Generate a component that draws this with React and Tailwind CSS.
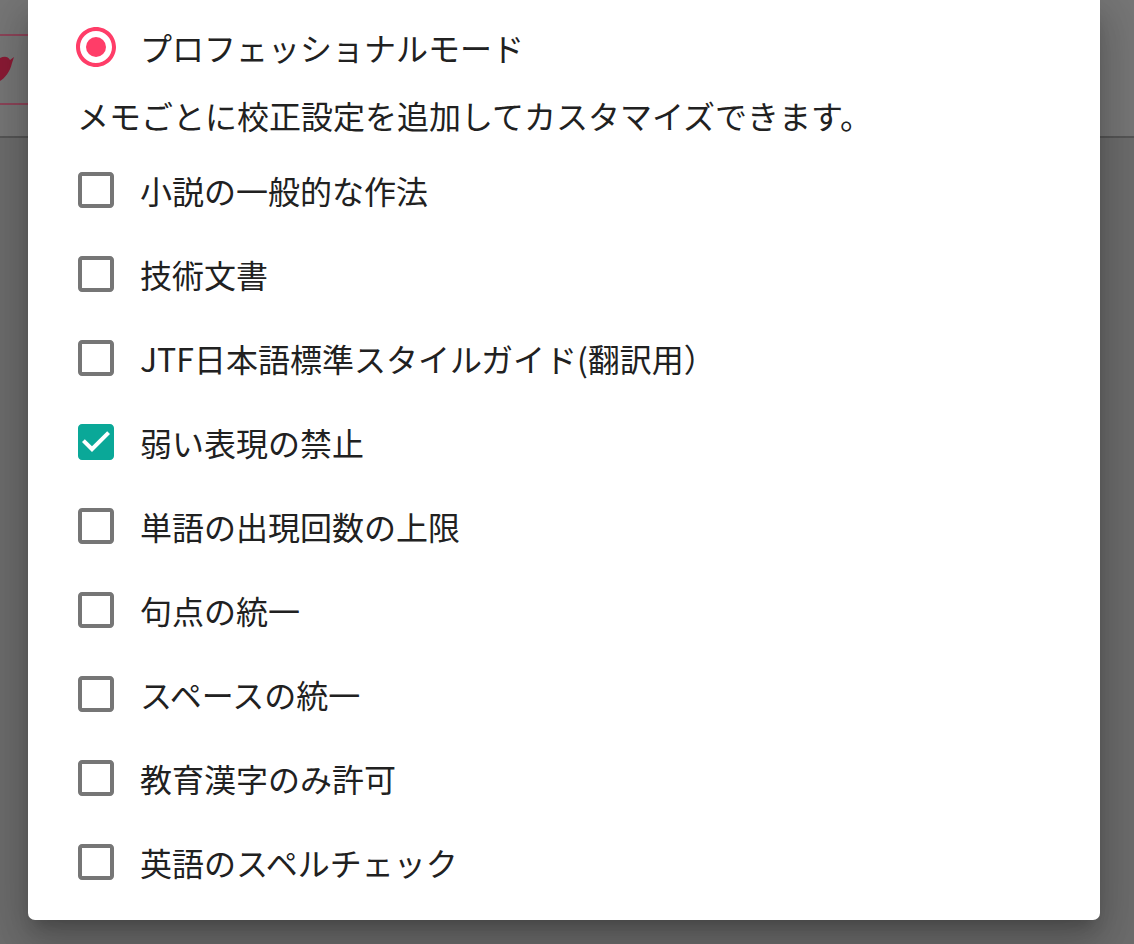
import React from 'react'

const font = { fontFamily: '"Noto Sans CJK JP", "Noto Sans", sans-serif' }

function RadioChecked() {
  return (
    <svg width="48" height="48" viewBox="0 0 24 24" fill="#ff3d68">
      <path d="M12 2C6.48 2 2 6.48 2 12s4.48 10 10 10 10-4.48 10-10S17.52 2 12 2zm0 18c-4.42 0-8-3.58-8-8s3.58-8 8-8 8 3.58 8 8-3.58 8-8 8z" />
      <circle cx="12" cy="12" r="5" />
    </svg>
  )
}

function CheckBox({ checked }) {
  if (checked) {
    return (
      <svg width="48" height="48" viewBox="0 0 24 24" fill="#0aa898">
        <path d="M19 3H5c-1.11 0-2 .9-2 2v14c0 1.1.89 2 2 2h14c1.11 0 2-.9 2-2V5c0-1.1-.89-2-2-2zm-9 14l-5-5 1.41-1.41L10 14.17l7.59-7.59L19 8l-9 9z" />
      </svg>
    )
  }
  return (
    <svg width="48" height="48" viewBox="0 0 24 24" fill="#767676">
      <path d="M19 5v14H5V5h14m0-2H5c-1.1 0-2 .9-2 2v14c0 1.1.9 2 2 2h14c1.1 0 2-.9 2-2V5c0-1.1-.9-2-2-2z" />
    </svg>
  )
}

const rules = [
  { label: '小説の一般的な作法', checked: false },
  { label: '技術文書', checked: false },
  { label: 'JTF日本語標準スタイルガイド(翻訳用）', checked: false },
  { label: '弱い表現の禁止', checked: true },
  { label: '単語の出現回数の上限', checked: false },
  { label: '句点の統一', checked: false },
  { label: 'スペースの統一', checked: false },
  { label: '教育漢字のみ許可', checked: false },
  { label: '英語のスペルチェック', checked: false },
]

export default function App() {
  return (
    <div className="relative w-[1134px] h-[944px] overflow-hidden bg-[#6c6c6c]" style={font}>
      {/* page behind the backdrop */}
      <div className="h-[138px] bg-[#767676] border-b-2 border-[#555]" />
      <div className="absolute left-0 top-[34px] w-[28px] h-[71px] border-y-2 border-[#8c4458]">
        <svg width="28" height="67" viewBox="0 0 28 67" className="block">
          <path d="M0 22 C4 20 8 20 10 24 L14 21 L12 27 C10 36 5 42 0 45 Z" fill="#8a1a34" />
        </svg>
      </div>

      {/* dialog */}
      <div className="absolute left-[28px] top-0 w-[1072px] h-[920px] bg-white rounded-b-[7px] shadow-[0_11px_15px_-7px_rgba(0,0,0,0.2),0_24px_38px_3px_rgba(0,0,0,0.14),0_9px_46px_8px_rgba(0,0,0,0.12)] pl-[44px] pt-[23px] text-[#212121]">
        <div className="flex items-center h-[48px] gap-[20px]">
          <RadioChecked />
          <span className="text-[32px] leading-[48px]">プロフェッショナルモード</span>
        </div>
        <p className="mt-[20px] ml-[5px] text-[32px] leading-[48px]">
          メモごとに校正設定を追加してカスタマイズできます。
        </p>
        <div className="flex flex-col mt-[9px]">
          {rules.map((r) => (
            <div key={r.label} className="flex items-center h-[84px] gap-[20px]">
              <CheckBox checked={r.checked} />
              <span className="text-[32px] leading-[48px]">{r.label}</span>
            </div>
          ))}
        </div>
      </div>
    </div>
  )
}
